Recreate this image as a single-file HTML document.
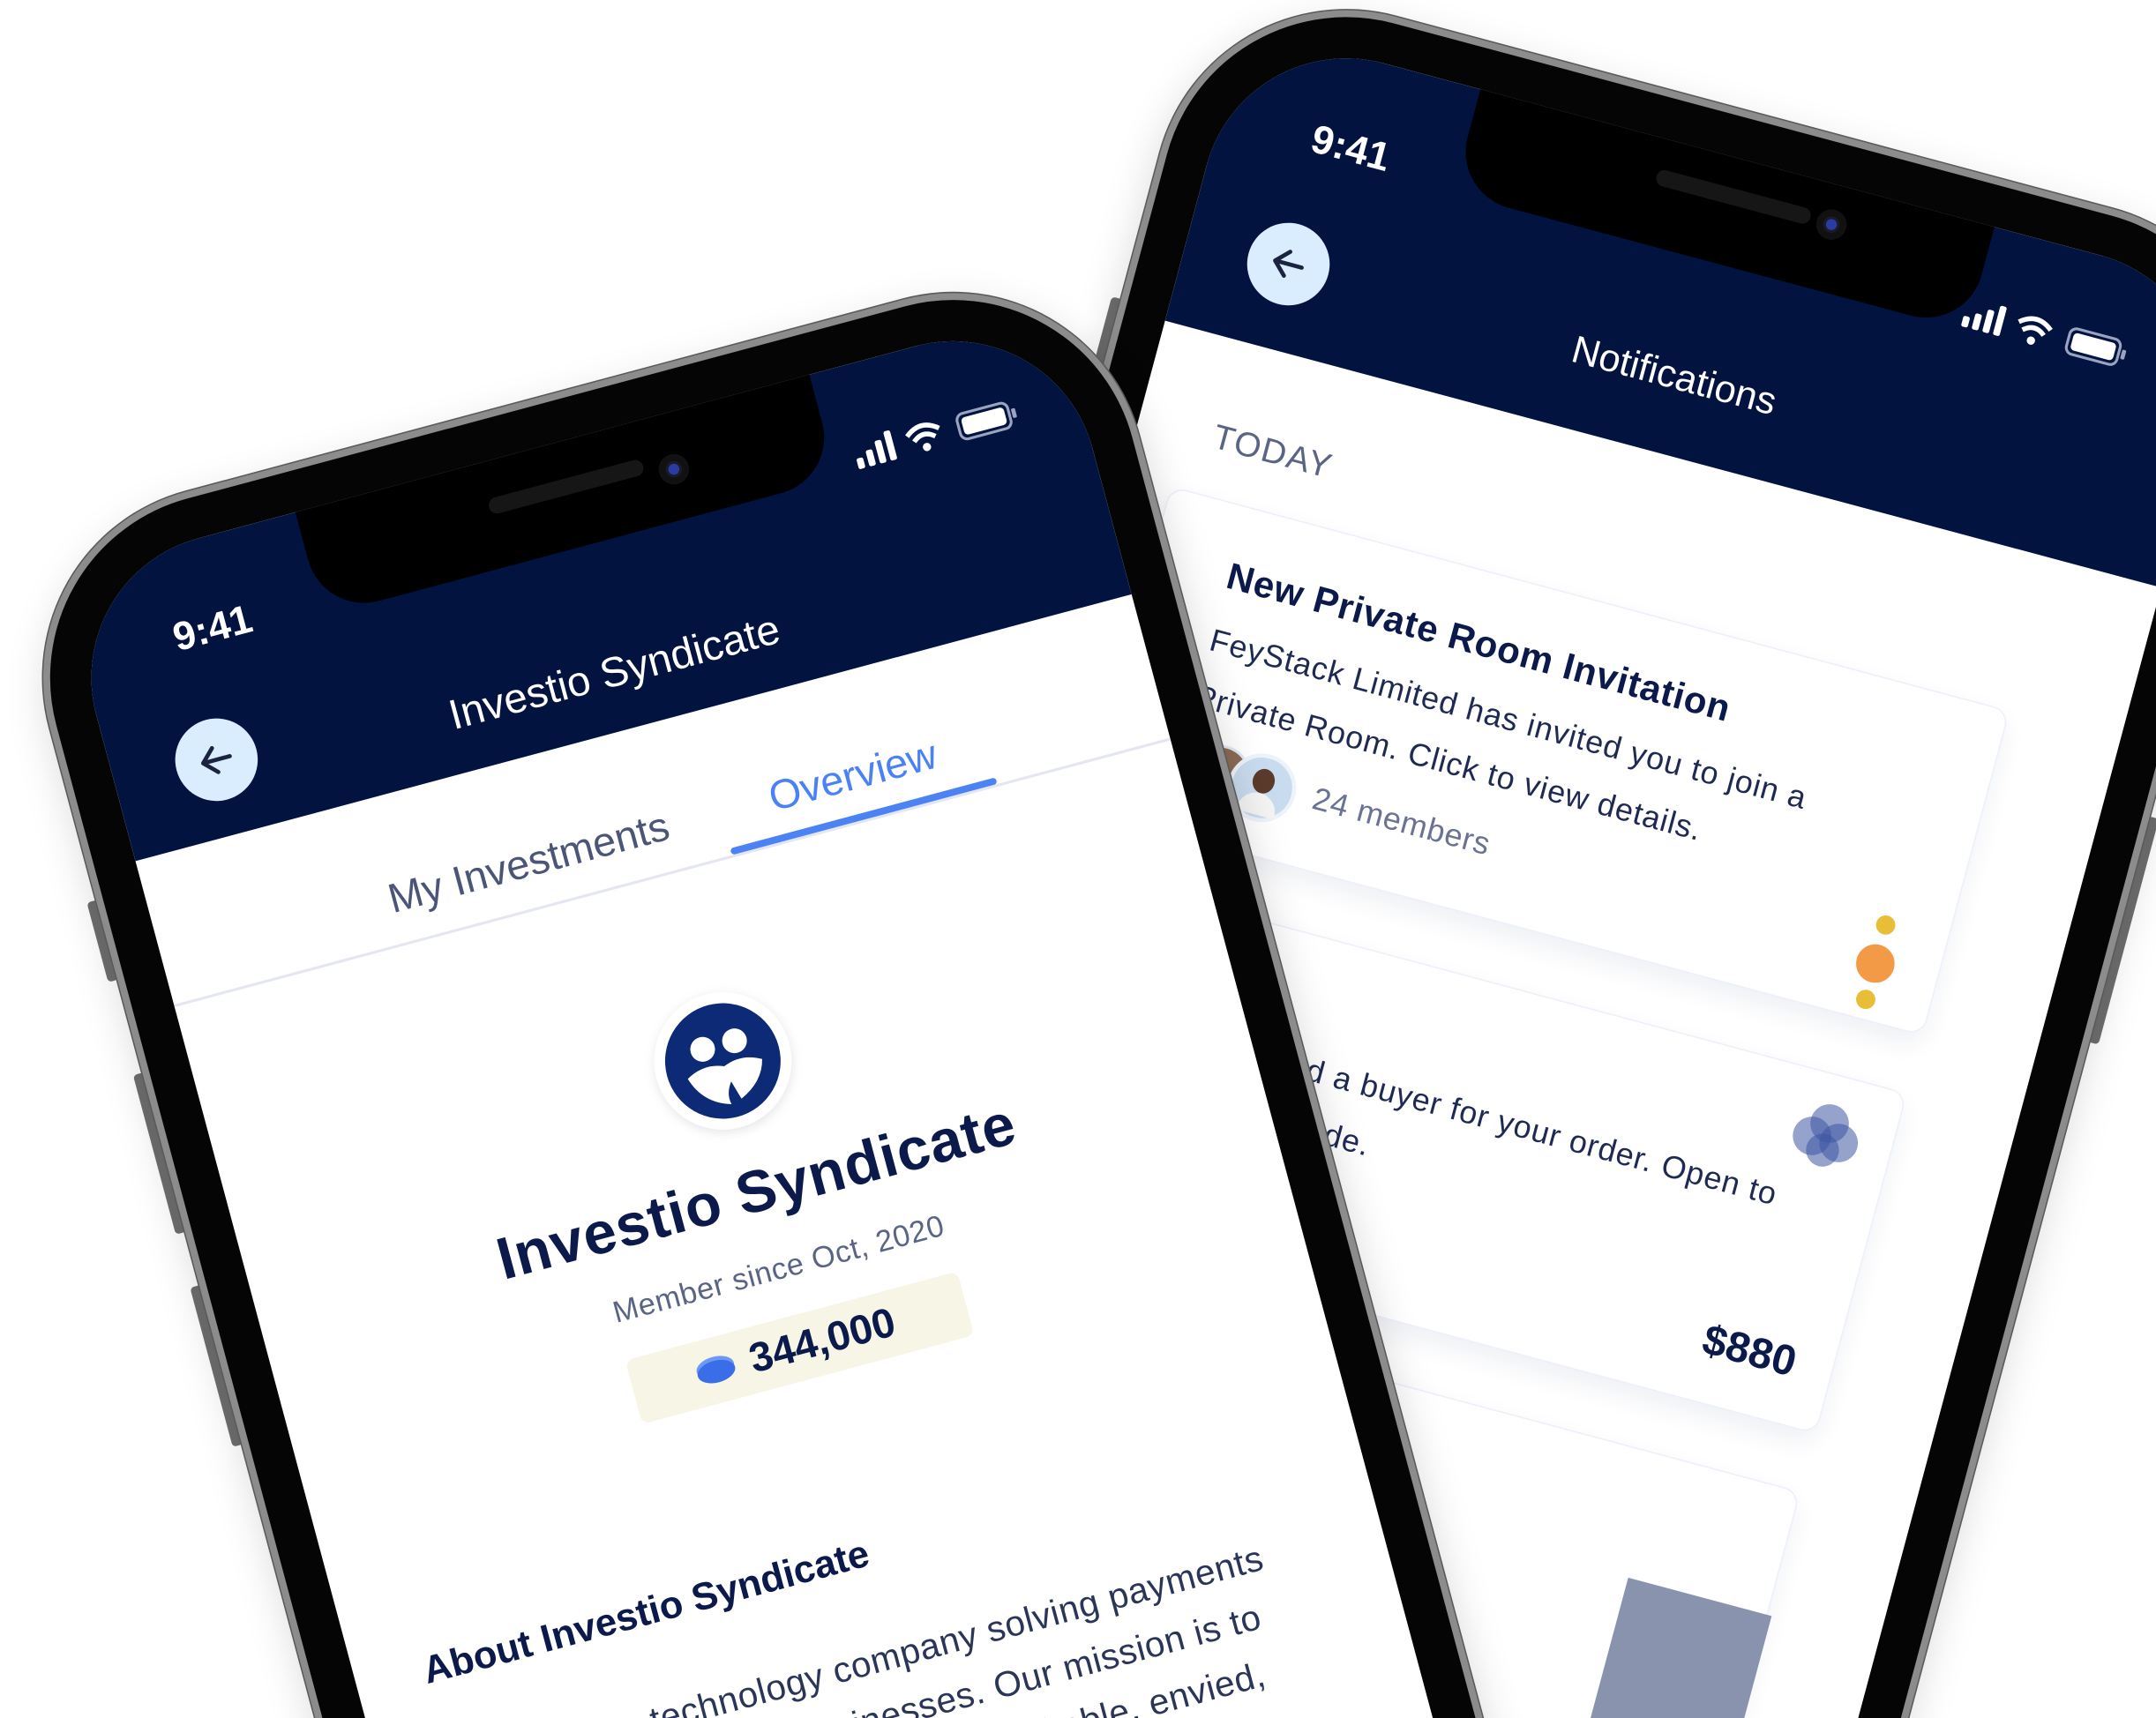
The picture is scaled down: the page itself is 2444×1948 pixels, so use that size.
<!DOCTYPE html>
<html><head><meta charset="utf-8"><style>
html,body{margin:0;padding:0;background:#fff;}
body{width:2444px;height:1948px;overflow:hidden;position:relative;font-family:"Liberation Sans",sans-serif;}
#stage{position:absolute;left:0;top:0;width:1568px;height:1250px;transform:scale(1.5587);transform-origin:0 0;overflow:hidden;}
.phone{position:absolute;width:820px;height:1800px;transform-origin:0 0;}
.frame{position:absolute;left:0;top:0;width:810px;height:1790px;border-radius:140px;background:#050505;border:5px solid #8c8c8c;box-shadow:0 0 0 1px #5a5a5a, 0 10px 30px rgba(0,0,0,.15);}
.btn{position:absolute;width:8px;background:#6e6e6e;border-radius:3px;}
.screen{position:absolute;left:35px;top:35px;width:750px;height:1730px;border-radius:105px;overflow:hidden;background:#fff;}
.header{position:absolute;left:0;top:0;width:100%;background:#02133f;}
.notch{position:absolute;left:178px;top:-10px;width:387px;height:88px;background:#000;border-radius:0 0 42px 42px;}
.spk{position:absolute;left:140px;top:32px;width:116px;height:12px;border-radius:6px;background:#161616;}
.cam{position:absolute;left:261px;top:28px;width:22px;height:22px;border-radius:50%;background:#1a1a2a;box-shadow:inset 0 0 0 5px #111;}
.cam:after{content:"";position:absolute;left:7px;top:7px;width:8px;height:8px;border-radius:50%;background:#2a3ca0;}
.abs{position:absolute;white-space:nowrap;}
.time{color:#fff;font-size:29px;font-weight:bold;transform:translate(-50%,-50%);}
.back{position:absolute;width:60px;height:60px;border-radius:50%;background:#d9edff;transform:translate(-50%,-50%);}
.ctr{transform:translate(-50%,-50%);}
.card{position:absolute;background:#fff;border:1px solid #edf0fa;border-radius:12px;box-shadow:0 8px 18px rgba(20,40,100,.07);}
</style></head><body>
<div id="stage">

<!-- RIGHT PHONE (behind) -->
<div class="phone" style="left:880px;top:-24px;transform:rotate(15deg);">
  <div class="btn" style="left:-7px;top:250px;height:60px;"></div>
  <div class="btn" style="left:-7px;top:380px;height:110px;"></div>
  <div class="btn" style="left:-7px;top:520px;height:110px;"></div>
  <div class="btn" style="left:819px;top:420px;height:170px;"></div>
  <div class="frame"></div>
  <div class="screen">
    <div class="header" style="height:222px;"></div>
    <div class="notch"><div class="spk"></div><div class="cam"></div></div>
    <div class="abs time" style="left:98px;top:67px;">9:41</div>
    <svg class="abs" style="left:560px;top:50px;" width="130" height="32" viewBox="0 0 130 32">
      <rect x="0" y="18" width="5" height="8" rx="1.5" fill="#fff"/><rect x="8" y="14" width="5" height="12" rx="1.5" fill="#fff"/><rect x="16" y="9" width="5" height="17" rx="1.5" fill="#fff"/><rect x="24" y="4" width="5" height="22" rx="1.5" fill="#fff"/>
      <path d="M40 12 Q52 2 64 12" stroke="#fff" stroke-width="3.5" fill="none"/><path d="M44 17 Q52 10 60 17" stroke="#fff" stroke-width="3.5" fill="none"/><circle cx="52" cy="23" r="3" fill="#fff"/>
      <rect x="78" y="6" width="38" height="19" rx="5" fill="none" stroke="#9aa3c0" stroke-width="2"/><rect x="81" y="9" width="32" height="13" rx="3" fill="#fff"/><rect x="118" y="12" width="3" height="7" rx="1" fill="#9aa3c0"/>
    </svg>
    <div class="back" style="left:76px;top:159px;"><svg width="60" height="60" viewBox="0 0 60 60"><path d="M40 30H20M29 21l-9 9 9 9" stroke="#1b2340" stroke-width="3" fill="none" stroke-linecap="round" stroke-linejoin="round"/></svg></div>
    <div class="abs ctr" style="left:368px;top:165px;color:#fff;font-size:28px;">Notifications</div>
    <div class="abs" style="left:56px;top:280px;color:#5a6485;font-size:25px;letter-spacing:1px;">TODAY</div>

    <div class="card" style="left:35px;top:337px;width:630px;height:243px;">
      <div class="abs" style="left:56px;top:36px;color:#0b1a4a;font-size:27px;font-weight:bold;letter-spacing:.5px;">New Private Room Invitation</div>
      <div class="abs" style="left:56px;top:78px;color:#1f2a52;font-size:23px;letter-spacing:.6px;line-height:42px;">FeyStack Limited has invited you to join a<br>Private Room. Click to view details.</div>
      <div class="abs" style="left:65px;top:171px;width:42px;height:42px;border-radius:50%;background:#8a6a55;border:2px solid #dfe8f5;"></div>
      <div class="abs" style="left:95px;top:169px;width:44px;height:44px;border-radius:50%;background:#c9dbee;border:3px solid #eef3fb;"><div style="position:absolute;left:14px;top:8px;width:16px;height:18px;border-radius:50%;background:#5b3b2b;"></div><div style="position:absolute;left:8px;top:26px;width:28px;height:16px;border-radius:14px 14px 0 0;background:#f4f4f4;"></div></div>
      <div class="abs" style="left:158px;top:178px;color:#6a7393;font-size:23px;letter-spacing:.5px;">24 members</div>
      <div class="abs" style="left:570px;top:188px;width:28px;height:28px;border-radius:50%;background:#f39a47;"></div>
      <div class="abs" style="left:577px;top:166px;width:14px;height:14px;border-radius:50%;background:#e8bd38;"></div>
      <div class="abs" style="left:577px;top:222px;width:14px;height:14px;border-radius:50%;background:#e8bd38;"></div>
    </div>

    <div class="card" style="left:35px;top:625px;width:630px;height:255px;">
      <div class="abs" style="left:56px;top:74px;color:#1f2a52;font-size:23px;letter-spacing:.6px;line-height:42px;">We have found a buyer for your order. Open to<br>proceed with trade.</div>
      <svg class="abs" style="left:552px;top:15px;" width="60" height="60" viewBox="0 0 60 60"><g fill="#3d55a3" fill-opacity=".55"><circle cx="30" cy="20" r="14"/><circle cx="20" cy="32" r="14"/><circle cx="40" cy="32" r="14"/><circle cx="30" cy="40" r="12"/></g></svg>
      <div class="abs" style="left:534px;top:192px;color:#0b1a4a;font-size:31px;font-weight:bold;">$880</div>
    </div>

    <div class="card" style="left:35px;top:925px;width:630px;height:300px;">
      <div class="abs" style="left:56px;top:220px;color:#1f2a52;font-size:23px;letter-spacing:.6px;">Join FeyStack Private</div>
      <div class="abs" style="left:526px;top:92px;width:108px;height:220px;background:#8a93ad;"></div>
    </div>
  </div>
</div>

<!-- LEFT PHONE (front) -->
<div class="phone" style="left:0px;top:394px;transform:rotate(-15deg);">
  <div class="btn" style="left:-7px;top:270px;height:60px;"></div>
  <div class="btn" style="left:-7px;top:400px;height:120px;"></div>
  <div class="btn" style="left:-7px;top:560px;height:120px;"></div>
  <div class="frame"></div>
  <div class="screen">
    <div class="header" style="height:215px;"></div>
    <div class="notch"><div class="spk" style="left:137px;top:37px;"></div><div class="cam" style="left:263px;top:40px;"></div></div>
    <div class="abs time" style="left:98px;top:67px;">9:41</div>
    <svg class="abs" style="left:582px;top:50px;" width="130" height="32" viewBox="0 0 130 32">
      <rect x="0" y="18" width="5" height="8" rx="1.5" fill="#fff"/><rect x="8" y="14" width="5" height="12" rx="1.5" fill="#fff"/><rect x="16" y="9" width="5" height="17" rx="1.5" fill="#fff"/><rect x="24" y="4" width="5" height="22" rx="1.5" fill="#fff"/>
      <path d="M40 12 Q52 2 64 12" stroke="#fff" stroke-width="3.5" fill="none"/><path d="M44 17 Q52 10 60 17" stroke="#fff" stroke-width="3.5" fill="none"/><circle cx="52" cy="23" r="3" fill="#fff"/>
      <rect x="78" y="6" width="38" height="19" rx="5" fill="none" stroke="#9aa3c0" stroke-width="2"/><rect x="81" y="9" width="32" height="13" rx="3" fill="#fff"/><rect x="118" y="12" width="3" height="7" rx="1" fill="#9aa3c0"/>
    </svg>
    <div class="back" style="left:76px;top:159px;"><svg width="60" height="60" viewBox="0 0 60 60"><path d="M40 30H20M29 21l-9 9 9 9" stroke="#1b2340" stroke-width="3" fill="none" stroke-linecap="round" stroke-linejoin="round"/></svg></div>
    <div class="abs ctr" style="left:372px;top:173px;color:#fff;font-size:30.5px;">Investio Syndicate</div>

    <div class="abs ctr" style="left:276px;top:291px;color:#4a5578;font-size:30px;">My Investments</div>
    <div class="abs ctr" style="left:520px;top:291px;color:#4a82f5;font-size:30px;">Overview</div>
    <div class="abs" style="left:0;top:323px;width:750px;height:2px;background:#e4e7f2;"></div>
    <div class="abs" style="left:420px;top:318px;width:200px;height:5px;border-radius:3px;background:#4b83f4;"></div>

    <svg class="abs" style="left:318px;top:409px;" width="114" height="114" viewBox="-57 -57 114 114">
      <circle r="50" fill="#fff" style="filter:drop-shadow(0 2px 4px rgba(0,0,0,.1))"/>
      <circle r="42" fill="#0c2a75"/>
      <circle cx="-12" cy="-12" r="9" fill="#fff"/><circle cx="12" cy="-12" r="9" fill="#fff"/>
      <path d="M-28 6 Q-14 -2 0 4 Q14 -2 28 6 Q24 22 6 30 L2 16 Q-4 24 -2 32 Q-22 26 -28 6Z" fill="#fff"/>
    </svg>
    <div class="abs ctr" style="left:374px;top:565px;color:#0b1a4a;font-size:43px;font-weight:bold;letter-spacing:.6px;">Investio Syndicate</div>
    <div class="abs ctr" style="left:375px;top:623px;color:#5a6485;font-size:22px;letter-spacing:.4px;">Member since Oct, 2020</div>
    <div class="abs ctr" style="left:375px;top:682px;width:250px;height:48px;background:#f6f5e6;border-radius:6px;">
      <div class="abs" style="left:48px;top:17px;width:28px;height:16px;border-radius:50%;background:#3a6ee8;box-shadow:0 -3px 0 #6b9af5;"></div>
      <div class="abs" style="left:88px;top:7px;color:#0b1a4a;font-size:30px;font-weight:bold;">344,000</div>
    </div>
    <div class="abs" style="left:50px;top:823px;color:#0b1a4a;font-size:28px;font-weight:bold;">About Investio Syndicate</div>
    <div class="abs" style="left:50px;top:896px;color:#2a3558;font-size:26px;line-height:41px;letter-spacing:.4px;">Investio is a technology company solving payments<br>for emerging African businesses. Our mission is to<br>make payments for businesses profitable, envied,<br>and globally competitive.</div>
  </div>
</div>

</div>
</body></html>
